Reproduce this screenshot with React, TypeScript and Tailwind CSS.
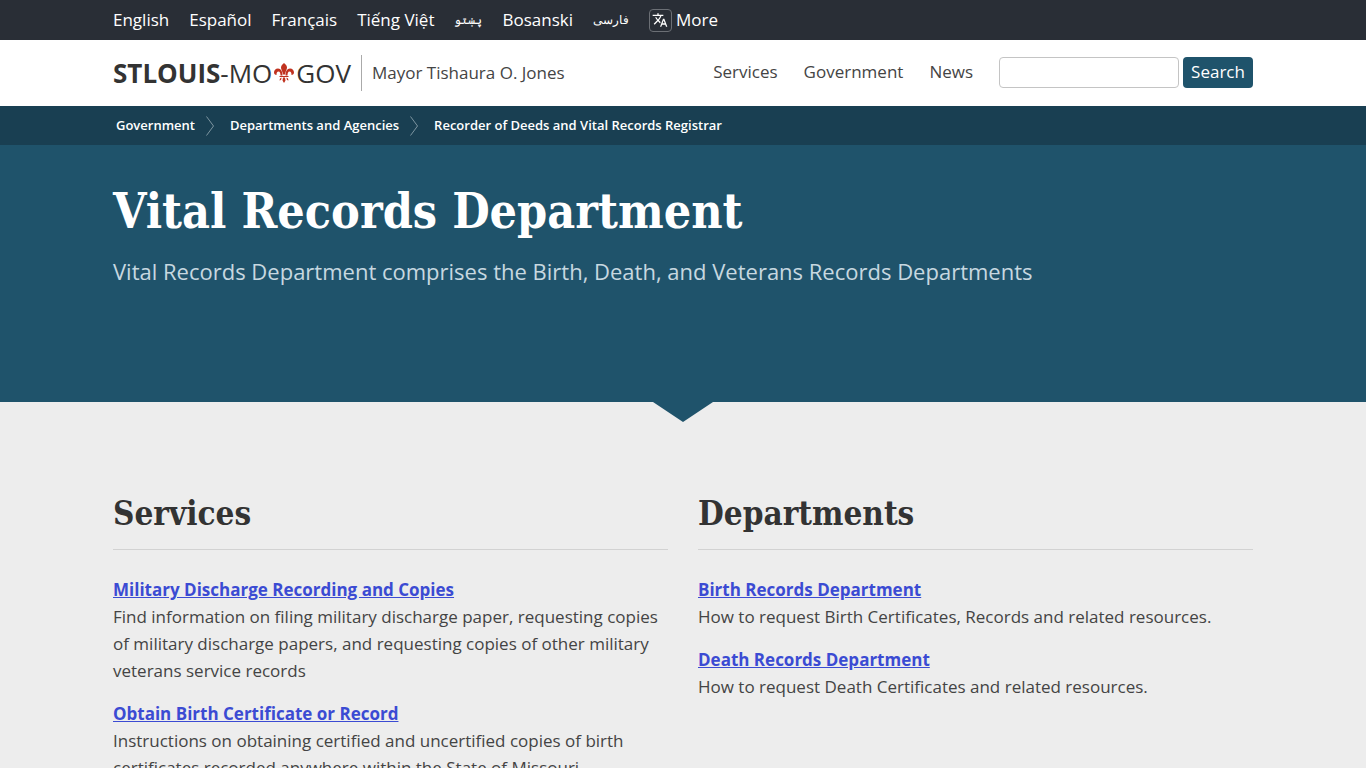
import { MdTranslate } from "react-icons/md";

interface Entry {
  title: string;
  description: string;
}

const languages = [
  { label: "English", lang: "en" },
  { label: "Español", lang: "es" },
  { label: "Français", lang: "fr" },
  { label: "Tiếng Việt", lang: "vi" },
  { label: "پښتو", lang: "ps", small: true },
  { label: "Bosanski", lang: "bs" },
  { label: "فارسی", lang: "fa", small: true },
];

const breadcrumbs = [
  "Government",
  "Departments and Agencies",
  "Recorder of Deeds and Vital Records Registrar",
];

const services: Entry[] = [
  {
    title: "Military Discharge Recording and Copies",
    description:
      "Find information on filing military discharge paper, requesting copies of military discharge papers, and requesting copies of other military veterans service records",
  },
  {
    title: "Obtain Birth Certificate or Record",
    description:
      "Instructions on obtaining certified and uncertified copies of birth certificates recorded anywhere within the State of Missouri.",
  },
];

const departments: Entry[] = [
  {
    title: "Birth Records Department",
    description:
      "How to request Birth Certificates, Records and related resources.",
  },
  {
    title: "Death Records Department",
    description: "How to request Death Certificates and related resources.",
  },
];

function FleurDeLis() {
  return (
    <svg viewBox="0 0 40 40" className="mx-0.5 h-5 w-5" fill="#c0321f" aria-hidden="true">
      <path d="M20 0c4 3 6 6 6 9 0 4-3 7-4 14h-4c-1-7-4-10-4-14 0-3 2-6 6-9z" />
      <path d="M17 25c0-8-3-14-9-14-5 0-8 4-8 8 0 3 2 5 5 5 0-4 1-7 4-7 3 0 4 4 4 8z" />
      <path d="M23 25c0-8 3-14 9-14 5 0 8 4 8 8 0 3-2 5-5 5 0-4-1-7-4-7-3 0-4 4-4 8z" />
      <path d="M11 26h18v2H11z" />
      <path d="M18 29h4l1 6-3 5-3-5zM15 29c0 4-1 6-4 6l1-4zM25 29c0 4 1 6 4 6l-1-4z" />
    </svg>
  );
}

function TopBar() {
  return (
    <div className="bg-[#292e36]">
      <nav
        aria-label="Languages"
        className="mx-auto flex h-10 max-w-[1140px] items-center gap-5 text-[17px] text-white"
      >
        {languages.map(({ label, lang, small }) => (
          <a key={lang} href="#" lang={lang} className={small ? "text-xs" : undefined}>
            {label}
          </a>
        ))}
        <a href="#" className="flex items-center gap-1">
          <span className="flex h-[23px] w-[23px] items-center justify-center rounded-sm border border-[#6b6f75]">
            <MdTranslate className="h-4 w-4" />
          </span>
          More
        </a>
      </nav>
    </div>
  );
}

function Header() {
  return (
    <header className="bg-white">
      <div className="mx-auto flex h-[66px] max-w-[1140px] items-center justify-between">
        <div className="flex items-center">
          <a href="#" className="flex items-center text-[26px] leading-9 text-[#333]">
            <span>
              <b>STLOUIS</b>-MO
            </span>
            <FleurDeLis />
            <span>GOV</span>
          </a>
          <a
            href="#"
            className="ml-2.5 flex h-9 items-center border-l border-[#aaa] pl-2.5 text-[17px] text-[#444]"
          >
            Mayor Tishaura O. Jones
          </a>
        </div>

        <div className="flex items-center pb-0.5">
          <nav aria-label="Main" className="mr-[26px] flex gap-[26px] text-[17px] text-[#444]">
            <a href="#">Services</a>
            <a href="#">Government</a>
            <a href="#">News</a>
          </nav>
          <form className="flex gap-1">
            <input
              type="search"
              aria-label="Search"
              className="h-[31px] w-[180px] rounded-sm border border-[#c4c4c4] bg-white px-2"
            />
            <button type="button" className="h-[31px] w-[70px] rounded-sm bg-[#1f536b] text-[17px] leading-6 text-white">
              Search
            </button>
          </form>
        </div>
      </div>
    </header>
  );
}

function Breadcrumbs() {
  return (
    <nav aria-label="Breadcrumb" className="bg-[#193f52]">
      <ol className="mx-auto flex h-[39px] max-w-[1140px] items-center pl-[3px] text-[13px] font-semibold text-white">
        {breadcrumbs.map((crumb, i) => (
          <li key={crumb} className="flex items-center">
            <a href="#">{crumb}</a>
            {i < breadcrumbs.length - 1 && (
              <svg
                viewBox="0 0 8 20"
                className="mr-4 ml-[11px] h-5 w-2"
                fill="none"
                stroke="#7d95a1"
                aria-hidden="true"
              >
                <path d="M0.500 0.500L7.500 10L0.500 19.500" />
              </svg>
            )}
          </li>
        ))}
      </ol>
    </nav>
  );
}

function Hero() {
  return (
    <section className="relative h-[257px] bg-[#1f536b]">
      <div className="mx-auto max-w-[1140px] pt-8">
        <h1 className="font-['DejaVu_Serif_Condensed','DejaVu_Serif',serif] text-5xl leading-[68px] font-bold text-white">
          Vital Records Department
        </h1>
        <p className="mt-2.5 text-[22px] leading-8 text-[#c7d8e0]">
          Vital Records Department comprises the Birth, Death, and Veterans Records Departments
        </p>
      </div>
      {/* Pointer into the content below */}
      <svg
        viewBox="0 0 60 20"
        className="absolute top-full left-1/2 h-5 w-[60px] -translate-x-1/2"
        fill="#1f536b"
        aria-hidden="true"
      >
        <path d="M0 0h60L30 20z" />
      </svg>
    </section>
  );
}

function EntryList({ heading, entries }: { heading: string; entries: Entry[] }) {
  return (
    <section>
      <h2 className="border-b border-[#d2d2d2] pb-3 font-['DejaVu_Serif_Condensed','DejaVu_Serif',serif] text-[33px] leading-[46px] font-bold text-[#333]">
        {heading}
      </h2>
      <ul className="mt-[26px] flex flex-col gap-4 text-[17px] leading-[27px] text-[#444]">
        {entries.map((entry) => (
          <li key={entry.title}>
            <a href="#" className="font-bold text-[#3b4bd3] underline">
              {entry.title}
            </a>
            <p>{entry.description}</p>
          </li>
        ))}
      </ul>
    </section>
  );
}

export default function App() {
  return (
    <div className="min-h-screen bg-[#ededed] font-['Open_Sans','Noto_Sans',sans-serif]">
      <TopBar />
      <Header />
      <Breadcrumbs />
      <Hero />
      <main className="mx-auto grid max-w-[1140px] grid-cols-2 gap-[30px] pt-[89px]">
        <EntryList heading="Services" entries={services} />
        <EntryList heading="Departments" entries={departments} />
      </main>
    </div>
  );
}
